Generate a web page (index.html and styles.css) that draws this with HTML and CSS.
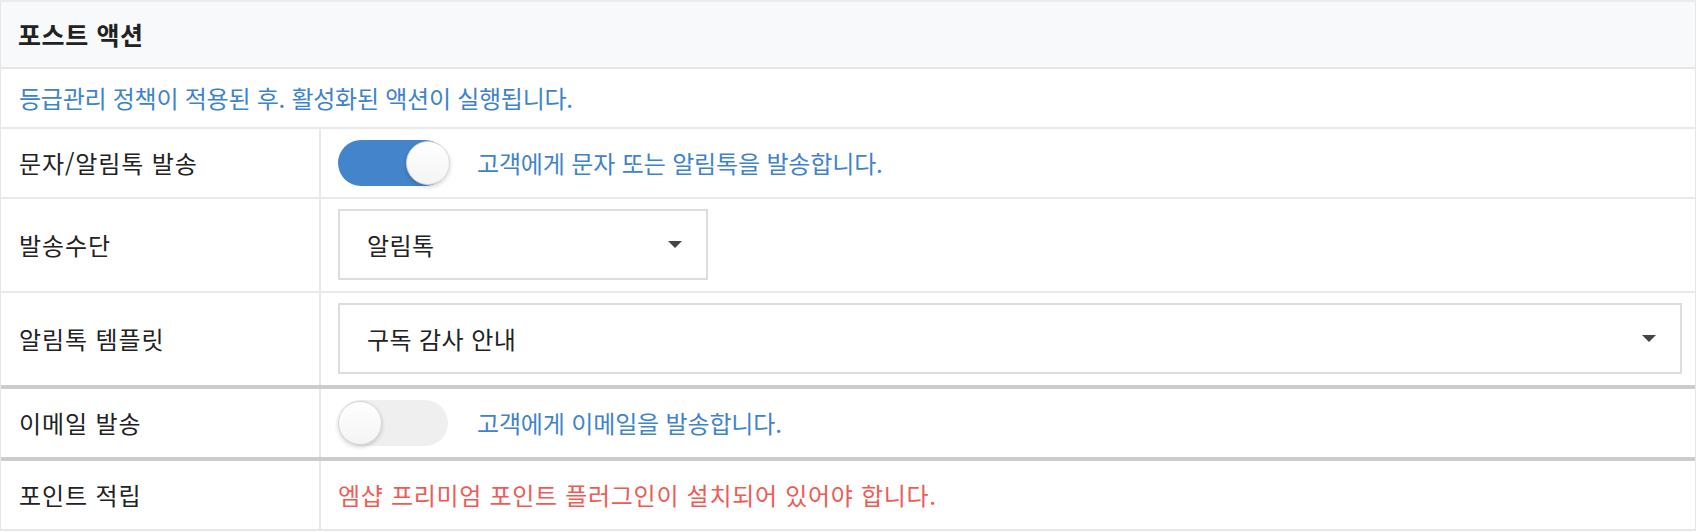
FILE: index.html
```html
<!DOCTYPE html>
<html lang="ko">
<head>
<meta charset="utf-8">
<link rel="stylesheet" href="styles.css">
</head>
<body>
<div class="panel">
  <div class="panel-head">포스트 액션</div>
  <div class="panel-desc">등급관리 정책이 적용된 후. 활성화된 액션이 실행됩니다.</div>

  <div class="row">
    <div class="label">문자/알림톡 발송</div>
    <div class="value">
      <span class="switch on"><span class="knob"></span></span>
      <span class="hint">고객에게 문자 또는 알림톡을 발송합니다.</span>
    </div>
  </div>

  <div class="row">
    <div class="label">발송수단</div>
    <div class="value">
      <div class="select short"><span>알림톡</span><span class="caret"></span></div>
    </div>
  </div>

  <div class="row">
    <div class="label">알림톡 템플릿</div>
    <div class="value">
      <div class="select wide"><span>구독 감사 안내</span><span class="caret"></span></div>
    </div>
  </div>

  <div class="row thick">
    <div class="label">이메일 발송</div>
    <div class="value">
      <span class="switch"><span class="knob"></span></span>
      <span class="hint">고객에게 이메일을 발송합니다.</span>
    </div>
  </div>

  <div class="row thick">
    <div class="label">포인트 적립</div>
    <div class="value">
      <span class="warn">엠샵 프리미엄 포인트 플러그인이 설치되어 있어야 합니다.</span>
    </div>
  </div>
</div>
</body>
</html>
```

FILE: styles.css
```css
* { box-sizing: border-box; }
html, body { margin: 0; padding: 0; background: #ffffff; }
body {
  font-family: "Noto Sans CJK KR", "Noto Sans", sans-serif;
  font-size: 24px;
  line-height: 1.4;
  color: #222222;
}
.panel {
  width: 1696px;
  border: 1px solid #e6e6e6;
  border-top: 2px solid #ececec;
  border-bottom: 2px solid #e6e6e6;
}
.panel-head {
  background: #f8f9fa;
  height: 67px;
  display: flex;
  align-items: center;
  padding-left: 17px;
  font-weight: 700;
  font-size: 25px;
  letter-spacing: 0.6px;
  color: #222222;
  border-bottom: 2px solid #e6e6e6;
}
.panel-desc {
  height: 58px;
  display: flex;
  align-items: center;
  padding-left: 18px;
  color: #3e83cc;
  letter-spacing: -0.25px;
}
.row {
  display: grid;
  grid-template-columns: 320px 1fr;
  border-top: 2px solid #e9e9e9;
}
.row.thick { border-top: 4px solid #cccccc; }
.label {
  display: flex;
  align-items: center;
  padding-left: 18px;
  border-right: 2px solid #e9e9e9;
  min-height: 68px;
  letter-spacing: 0.9px;
}
.value {
  display: flex;
  align-items: center;
  padding: 10px 14px 11px 17px;
}
.switch {
  position: relative;
  width: 110px;
  height: 46px;
  border-radius: 23px;
  background: #efefef;
  flex: none;
}
.switch.on { background: #4484ca; }
.knob {
  position: absolute;
  top: 1px;
  left: 0;
  width: 44px;
  height: 44px;
  border-radius: 50%;
  background: linear-gradient(#ffffff, #f4f4f4);
  border: 1px solid #d6d6d6;
  box-shadow: 0 2px 4px rgba(0,0,0,0.18);
}
.switch.on .knob { left: auto; right: -2px; }
.hint { color: #3e83cc; margin-left: 29px; letter-spacing: -0.15px; }
.warn { color: #ee5b55; letter-spacing: 0.7px; }
.select {
  height: 71px;
  border: 2px solid #dddddd;
  display: flex;
  align-items: center;
  justify-content: space-between;
  padding: 0 24px 0 27px;
  background: #ffffff;
  letter-spacing: 0.4px;
}
.select.short { width: 370px; }
.select.wide { width: 1344px; }
.caret {
  width: 0; height: 0;
  border-left: 7px solid transparent;
  border-right: 7px solid transparent;
  border-top: 7px solid #444444;
}
```
